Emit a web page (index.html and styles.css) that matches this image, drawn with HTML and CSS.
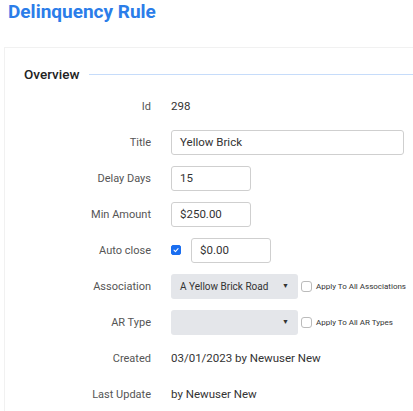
FILE: index.html
```html
<!DOCTYPE html>
<html>
<head>
<meta charset="utf-8">
<link rel="stylesheet" href="styles.css">
</head>
<body>
<h1 class="page-title">Delinquency Rule</h1>
<div class="card">
  <div class="section-head">
    <span class="section-title">Overview</span>
    <span class="section-line"></span>
  </div>
  <div class="form">
    <div class="row"><div class="label">Id</div><div class="value">298</div></div>
    <div class="row"><div class="label">Title</div><div class="value"><div class="input wide">Yellow Brick</div></div></div>
    <div class="row"><div class="label">Delay Days</div><div class="value"><div class="input short">15</div></div></div>
    <div class="row"><div class="label">Min Amount</div><div class="value"><div class="input short">$250.00</div></div></div>
    <div class="row"><div class="label">Auto close</div><div class="value">
      <span class="check checked"><svg viewBox="0 0 10 10" width="10" height="10"><path d="M2.5 5.2 L4.3 7 L7.6 3.3" fill="none" stroke="#fff" stroke-width="1.3" stroke-linecap="round" stroke-linejoin="round"/></svg></span>
      <div class="input short">$0.00</div></div></div>
    <div class="row"><div class="label">Association</div><div class="value">
      <div class="select"><span>A Yellow Brick Road</span><span class="arrow">▼</span></div>
      <span class="check"></span><span class="small">Apply To All Associations</span></div></div>
    <div class="row"><div class="label">AR Type</div><div class="value">
      <div class="select"><span></span><span class="arrow">▼</span></div>
      <span class="check"></span><span class="small">Apply To All AR Types</span></div></div>
    <div class="row"><div class="label">Created</div><div class="value">03/01/2023 by Newuser New</div></div>
    <div class="row"><div class="label">Last Update</div><div class="value">by Newuser New</div></div>
  </div>
</div>
</body>
</html>
```
FILE: styles.css
```css
html, body {
  margin: 0;
  padding: 0;
  background: #fff;
  font-family: Roboto, "Noto Sans", sans-serif;
  color: #333;
  overflow: hidden;
  height: 411px;
}
.page-title {
  margin: 0;
  padding: 0 8px;
  height: 30px;
  line-height: 23px;
  font-size: 19px;
  font-weight: 700;
  color: #2b7de9;
}
.card {
  margin: 17px 0 0 4px;
  width: 440px;
  background: #fff;
  border: 1px solid #f1f1f1;
  border-right: none;
  padding: 16px 0 0 19px;
  box-sizing: border-box;
  height: 370px;
}
.section-head {
  display: flex;
  align-items: center;
  height: 20px;
}
.section-title {
  font-size: 13.5px;
  font-weight: 500;
  color: #222;
}
.section-line {
  flex: 1;
  height: 1px;
  background: #c6dcfa;
  margin-left: 10px;
}
.form {
  margin-top: 4px;
}
.row {
  display: flex;
  align-items: center;
  height: 36px;
}
.label {
  width: 127px;
  text-align: right;
  font-size: 11px;
  color: #555;
  flex: none;
}
.value {
  margin-left: 20px;
  display: flex;
  align-items: center;
  font-size: 11.5px;
  color: #333;
}
.input {
  height: 25px;
  box-sizing: border-box;
  border: 1px solid #cfcfcf;
  border-radius: 3px;
  padding: 0 8px;
  display: flex;
  align-items: center;
  font-size: 11.5px;
  color: #333;
  background: #fff;
}
.input.wide { width: 233px; }
.input.short { width: 80px; }
.check {
  width: 10px;
  height: 10px;
  box-sizing: border-box;
  border: 1px solid #bbb;
  border-radius: 2px;
  background: #fff;
  display: inline-flex;
  align-items: center;
  justify-content: center;
  flex: none;
}
.check.checked {
  background: #1a6ef0;
  border-color: #1a6ef0;
  margin-right: 10px;
}
.check.checked svg { display: block; }
.select {
  width: 127px;
  height: 25px;
  box-sizing: border-box;
  background: #e4e6ea;
  border-radius: 3px;
  display: flex;
  align-items: center;
  justify-content: space-between;
  padding: 0 9px 0 9px;
  font-size: 10px;
  font-weight: 400;
  color: #333;
  margin-right: 3px;
}
.select .arrow {
  font-size: 7px;
  color: #333;
}
.small {
  font-size: 8px;
  color: #333;
  margin-left: 4px;
}
.value .check:not(.checked) {
  width: 11px;
  height: 11px;
  border-radius: 3px;
}
```
